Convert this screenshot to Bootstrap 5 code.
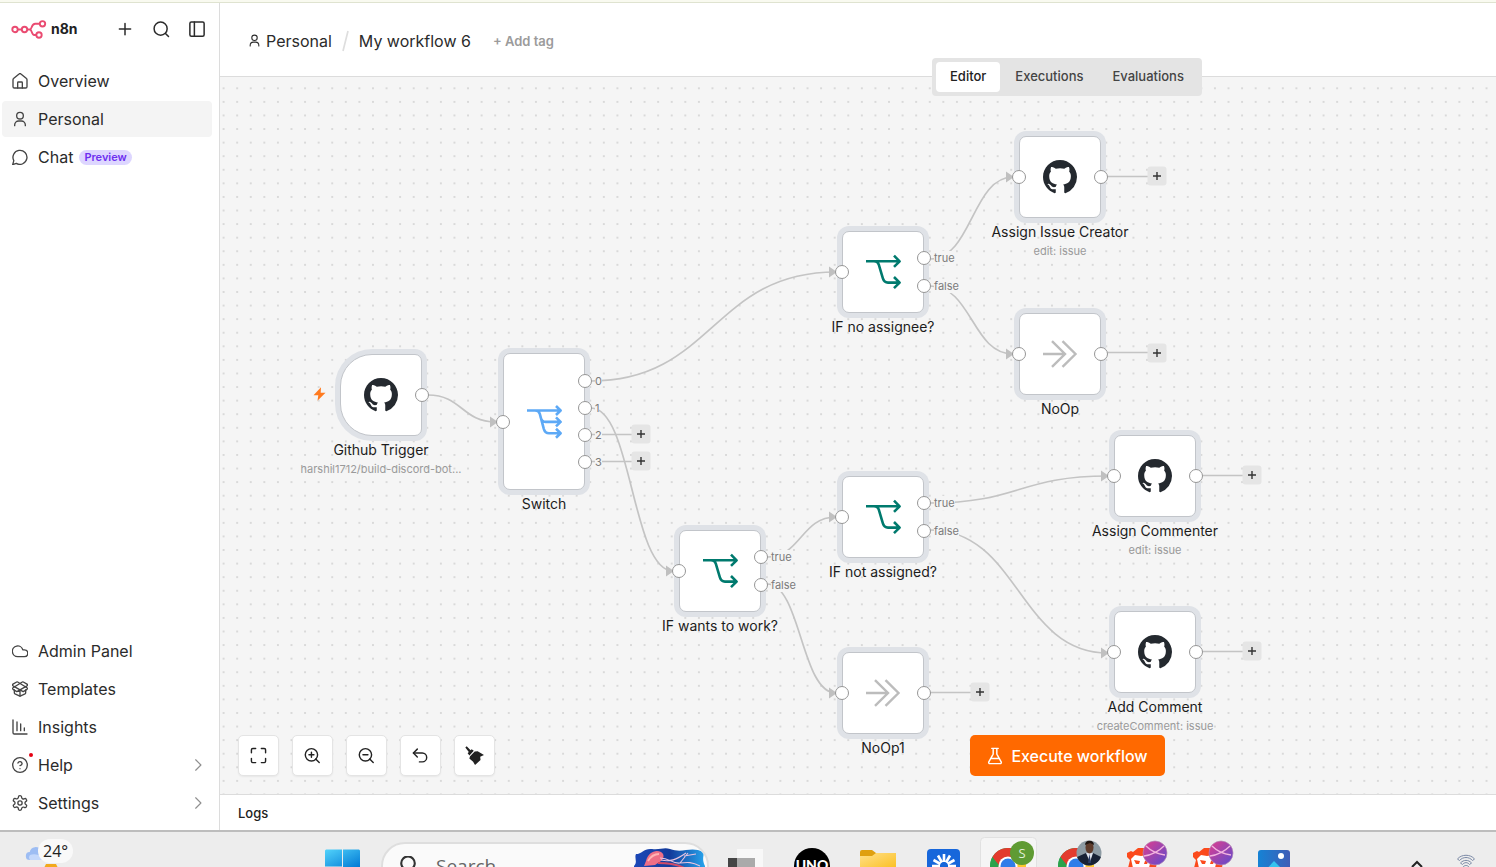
<!DOCTYPE html>
<html lang="en">
<head>
<meta charset="utf-8">
<meta name="viewport" content="width=device-width, initial-scale=1">
<title>My workflow 6 - n8n</title>
<link href="https://cdn.jsdelivr.net/npm/bootstrap@5.3.0/dist/css/bootstrap.min.css" rel="stylesheet">
<style>
  body { font-family: Inter, "Liberation Sans", sans-serif; font-size: 16px; line-height: 24px; color: #2b2b2b; background: #fff; }
  a { color: inherit; text-decoration: none; }
  svg { display: block; }
  .line-icon { fill: none; stroke: currentColor; stroke-width: 2; stroke-linecap: round; stroke-linejoin: round; flex: none; }
  .top-strip { height: 3px; background: #f9faf0; border-bottom: 1px solid #dfe3d0; flex: none; }
  .main-row, .main-pane { min-width: 0; min-height: 0; }

  /* sidebar */
  .side { width: 220px; border-right: 1px solid #dcdcdc; padding: 8px 7px 7px 2px; flex: none; }
  .side-head { height: 36px; padding-left: 9px; margin: 0 -3px 16px 0; }
  .brand-name { font-size: 14px; font-weight: 700; color: #222; margin-left: 4px; }
  .head-btn { width: 36px; height: 36px; padding: 0; border: 0; background: none; color: #2b2b2b; display: grid; place-items: center; }
  .side-link { height: 36px; padding: 0 7px 0 10px; gap: 10px; border-radius: 4px; color: #2b2b2b; margin-bottom: 2px; }
  .side-link.active { background: #f4f4f4; }
  .side-link > .line-icon:first-child { color: #444; width: 16px; height: 16px; }
  .preview { font-size: 11px; line-height: 15px; font-weight: 600; background: #ddd6ff; color: #6e2ff0; border-radius: 8px; padding: 0 5px; margin-left: -4px; }
  .alert-dot { width: 4px; height: 4px; top: 6px; left: 27px; border-radius: 2px; background: #e60012; }
  .chev { color: #8f8f8f; margin-left: auto; }

  /* header */
  .top-head { height: 74px; border-bottom: 1px solid #dcdcdc; padding: 2px 28px 0; flex: none; }
  .owner { gap: 5px; }
  .add-tag { border: 0; background: none; padding: 0; font-size: 13px; font-weight: 600; color: #9b9b9b; margin-left: 22px; }
  .view-tabs { left: 712px; top: 55px; z-index: 5; gap: 1px; background: #e4e4e4; border-radius: 4px; padding: 4px; }
  .view-tabs .nav-link { font-size: 13px; line-height: 20px; font-weight: 500; color: #444; padding: 4px 14px 6px; border-radius: 4px; height: 30px; }
  .view-tabs .nav-link.active { background: #fff; color: #222; }

  /* canvas */
  .flow { background: #f5f5f5; overflow: hidden; }
  .wires { inset: 0; width: 100%; height: 100%; }
  .wires .edge { fill: none; stroke: #c4c4c4; stroke-width: 1.7; }
  .wires .tip { fill: #c0c0c0; }
  .step { width: 82px; height: 82px; background: #fff; border: 1px solid #c2c5ca; border-radius: 7px; box-shadow: 0 0 0 5px #dfe2e7; display: grid; place-items: center; }
  .step.tall { height: 137px; }
  .step.start { border-radius: 32px 7px 7px 32px; }
  .caption { top: 100%; left: 50%; transform: translateX(-50%); padding-top: 5px; text-align: center; white-space: nowrap; font-size: 14px; line-height: 20px; font-weight: 400; color: #1c1c1c; }
  .caption span { display: block; font-size: 11px; line-height: 18px; color: #9a9a9a; }
  .port { width: 14px; height: 14px; border-radius: 7px; border: 1px solid #969696; background: #fff; transform: translate(-50%, -50%); }
  .port.in { left: -1px; top: 50%; }
  .port.out { left: calc(100% + 1px); top: 50%; }
  .port.yes { top: 33%; }
  .port.no { top: 67%; }
  .port.o0 { top: 20%; } .port.o1 { top: 40%; } .port.o2 { top: 60%; } .port.o3 { top: 80%; }
  .port em { position: absolute; left: 16px; top: -1px; font-size: 11px; line-height: 14px; font-style: normal; color: #7b7b7b; background: #f5f5f5; }
  .plus { width: 19px; height: 19px; padding: 0; border: 0; border-radius: 3px; background: #e5e5e5; color: #333; display: grid; place-items: center; transform: translate(-50%, -50%); left: calc(100% + 57px); }
  #trigger { left: 120px; top: 277px; }
  #switch { left: 283px; top: 276px; }
  #if-none { left: 622px; top: 154px; }
  #assign-creator { left: 799px; top: 59px; }
  #noop { left: 799px; top: 236px; }
  #if-not { left: 622px; top: 399px; }
  #if-wants { left: 459px; top: 453px; }
  #noop1 { left: 622px; top: 575px; }
  #assign-commenter { left: 894px; top: 358px; }
  #add-comment { left: 894px; top: 534px; }
  .plus.at-right { top: calc(50% - 1px); }
  .plus.at-o2 { top: 59%; }
  .plus.at-o3 { top: 79%; }
  .bolt { left: 93px; top: 310px; }
  .view-tools { left: 18px; bottom: 18px; gap: 13px; }
  .tool { width: 41px; height: 41px; border: 1px solid #e4e4e4; border-radius: 5px; background: #fff; color: #222; padding: 0; display: grid; place-items: center; box-shadow: 0 1px 2px #0000000f; }
  .run-btn { left: 750px; bottom: 18px; width: 195px; height: 41px; border: 0; border-radius: 5px; background: #ff6900; color: #fff; font-weight: 500; gap: 8px; padding: 0; }
  .logs { height: 36px; border-top: 1px solid #dcdcdc; padding: 1px 18px 0; font-size: 13px; font-weight: 500; color: #222; flex: none; }

  /* taskbar */
  .os-bar { height: 37px; border-top: 2px solid #bdbdbd; background: #ededed; overflow: hidden; flex: none; font-family: "Open Sans", "Noto Sans", sans-serif; }
  .weather { width: 325px; padding-left: 24px; height: 38px; flex: none; }
  .degree { background: #f9f9f9; border-radius: 12px; padding: 0 5px; margin-left: -6px; color: #222; font-size: 16px; line-height: 24px; }
  .sunrise { left: 44px; top: 32px; }
  .os-search { width: 328px; height: 48px; margin: 10px 3px 0 21px; border: 2px solid #dedede; border-radius: 24px; background: #fafafa; padding-left: 14px; flex: none; overflow: hidden; }
  .os-search input { border: 0; background: none; width: 190px; padding: 0; margin: 10px 8px 0 17px; font-size: 19px; line-height: 24px; color: #666; outline: 0; }
  .os-search input::placeholder { color: #666; opacity: 1; }
  .app { flex: none; width: 66px; height: 35px; border: 0; background: none; padding: 0; }
  .tray { padding-right: 20px; gap: 32px; }
</style>
</head>
<body class="vh-100 d-flex flex-column overflow-hidden">
<svg width="0" height="0" class="position-absolute" aria-hidden="true">
  <defs>
    <symbol id="github" viewBox="0 0 16 16"><path fill="#24292f" d="M8 0C3.58 0 0 3.58 0 8c0 3.54 2.29 6.53 5.47 7.59.4.07.55-.17.55-.38 0-.19-.01-.82-.01-1.49-2.01.37-2.53-.49-2.69-.94-.09-.23-.48-.94-.82-1.13-.28-.15-.68-.52-.01-.53.63-.01 1.08.58 1.23.82.72 1.21 1.87.87 2.33.66.07-.52.28-.87.51-1.07-1.78-.2-3.64-.89-3.64-3.95 0-.87.31-1.59.82-2.15-.08-.2-.36-1.02.08-2.12 0 0 .67-.21 2.2.82.64-.18 1.32-.27 2-.27s1.36.09 2 .27c1.53-1.04 2.2-.82 2.2-.82.44 1.1.16 1.92.08 2.12.51.56.82 1.27.82 2.15 0 3.07-1.87 3.75-3.65 3.95.29.25.54.73.54 1.48 0 1.07-.01 1.93-.01 2.2 0 .21.15.46.55.38A8.01 8.01 0 0 0 16 8c0-4.42-3.58-8-8-8"/></symbol>
    <symbol id="branch" viewBox="-18 -18 36 36"><g fill="none" stroke="#007a6e" stroke-width="2.6" stroke-linejoin="round"><path d="M-17-10.700H16.500M11-16.300l5.600 5.600-5.600 5.600M-9-10.700c3 0 4.100 1.200 4.800 3.300l4 13.500c.9 3 2.200 4.500 5.200 4.500h11.500M11 5l5.600 5.600-5.600 5.600"/></g></symbol>
    <symbol id="switcher" viewBox="-18 -18 36 36"><g fill="none" stroke="#5da9f6" stroke-width="2.600" stroke-linejoin="round"><path d="M-17-11.500H16.500M12-16l4.600 4.500L12-7M-9-11.500c3 0 4.100 1.200 4.800 3.300l4 15c.9 3 2.200 4.500 5.200 4.500h11.500M12 6.800l4.600 4.500L12 15.800M-3.500-5c1 3.500 2 4.900 5 4.900h15M12-4.600L16.600-.1 12 4.400"/></g></symbol>
    <symbol id="forward" viewBox="-18 -18 36 36"><path fill="none" stroke="#bcbcbc" stroke-width="2.400" d="M-17 0H5M-8-12.800L5 0-8 12.800M2.500-12.800L15.500 0 2.500 12.800"/></symbol>
    <symbol id="add" viewBox="0 0 9 9"><path d="M4.500.5v8M.5 4.500h8" stroke="currentColor" stroke-width="1.400"/></symbol>
    <symbol id="user" viewBox="0 0 24 24"><circle cx="12" cy="7" r="5"/><path d="M20 22v-1a6 6 0 0 0-6-6h-4a6 6 0 0 0-6 6v1"/></symbol>
    <symbol id="right" viewBox="0 0 24 24"><path d="m8 3 9 9-9 9"/></symbol>
    <symbol id="chrome" viewBox="0 0 36 36"><circle cx="18" cy="18" r="18" fill="#2ba24c"/><path d="M2.400 9A18 18 0 0 1 33.600 9L18 18z" fill="#e33b2e"/><path d="M2.400 9 10 22 18 9z" fill="#e33b2e"/><path d="M2.400 9A18 18 0 0 0 10 34l3-12z" fill="#2ba24c"/><path d="M33.600 9A18 18 0 0 1 18 36l8-18-8-9z" fill="#fdc72e"/><circle cx="18" cy="18" r="9.500" fill="#fff"/><circle cx="18" cy="18" r="7.500" fill="#2f7de9"/></symbol>
    <linearGradient id="orb" x1="0" y1="0" x2="1" y2="1"><stop offset="0" stop-color="#e23d8c"/><stop offset="1" stop-color="#5a4bd0"/></linearGradient>
    <symbol id="brave" viewBox="0 0 66 35"><path d="M19 21l4-2 2 1 5-4h10l6 6 3 6-1 8H20l2-8-3-3z" fill="#fb4a1c"/><path d="M23 27l4-4 6 1 6-1 4 4-2 9H25z" fill="#fff"/><path d="M26 28l6 1-1 3-3 0zM37 29l4-1-2 4-3 0z" fill="#fb4a1c"/><circle cx="47" cy="21" r="12" fill="url(#orb)" stroke="#b58ab5" stroke-width=".700"/><path d="M38 14c5 5 11 8 19 9M36 24c8-1 14-4 20-10" stroke="#f3b4df" stroke-width="1.300" fill="none"/></symbol>
  </defs>
</svg>

<div class="top-strip"></div>
<div class="main-row d-flex flex-grow-1">
  <nav class="side d-flex flex-column" aria-label="Main">
    <div class="side-head d-flex align-items-center">
      <svg width="36" height="20" viewBox="0 0 36 20" fill="none" stroke="#ea4b71" stroke-width="1.900"><circle cx="4" cy="10.500" r="2.700"/><circle cx="13.500" cy="10.500" r="2.700"/><circle cx="31.500" cy="4.800" r="2.700"/><circle cx="28" cy="16" r="2.700"/><path d="M6.700 10.500h4.100M16.200 10.500h2.600c2.400 0 1.300-5.700 5.500-5.700h4.500M18.800 10.500c2.400 0 1.500 5.500 4.500 5.500h2"/></svg>
      <span class="brand-name">n8n</span>
      <button class="head-btn ms-auto" aria-label="Add"><svg class="line-icon" width="18" height="18" viewBox="0 0 24 24"><path d="M4.500 12h15M12 4.500v15"/></svg></button>
      <button class="head-btn" aria-label="Search"><svg class="line-icon" width="18" height="18" viewBox="0 0 24 24"><circle cx="11.500" cy="11.500" r="8.700"/><path d="m22 22-4-4"/></svg></button>
      <button class="head-btn" aria-label="Toggle sidebar"><svg class="line-icon" width="18" height="18" viewBox="0 0 24 24"><rect x="2.500" y="2.500" width="19" height="19" rx="2"/><path d="M8.500 2.500v19"/></svg></button>
    </div>
    <a href="#" class="side-link d-flex align-items-center"><svg class="line-icon" viewBox="0 0 24 24"><path d="M15.500 22.500v-8a1 1 0 0 0-1-1h-5a1 1 0 0 0-1 1v8"/><path d="M1.500 10a2 2 0 0 1 .8-1.600l8.300-7a2 2 0 0 1 2.800 0l8.300 7a2 2 0 0 1 .8 1.600v10.500a2 2 0 0 1-2 2h-17a2 2 0 0 1-2-2z"/></svg>Overview</a>
    <a href="#" class="side-link active d-flex align-items-center"><svg class="line-icon" viewBox="0 0 24 24"><use href="#user"/></svg>Personal</a>
    <a href="#" class="side-link d-flex align-items-center"><svg class="line-icon" viewBox="0 0 24 24"><path d="M6.500 21.500A10.500 10.500 0 1 0 2.700 17.500L1 23.500z"/></svg>Chat <span class="preview">Preview</span></a>
    <div class="mt-auto">
      <a href="#" class="side-link d-flex align-items-center"><svg class="line-icon" viewBox="0 0 24 24"><path d="M18.500 20.500H8.500a8 8 0 1 1 7.700-10.300h2.300a5.150 5.150 0 1 1 0 10.300z"/></svg>Admin Panel</a>
      <a href="#" class="side-link d-flex align-items-center"><svg class="line-icon" viewBox="0 0 24 24"><path d="M12 22.500v-9M15.500 1.500a1.500 1.500 0 0 1 1.500 0l5.500 3.200a1.500 1.500 0 0 1 0 2.500L8 15.500a1.500 1.500 0 0 1-1.500 0L1.500 12.500a1.500 1.500 0 0 1 0-2.300z"/><path d="M20.500 13.500v4a2 2 0 0 1-1 1.800l-6.500 3a2 2 0 0 1-2 0l-6.500-3a2 2 0 0 1-1-1.800v-4"/><path d="M22.500 12.500a1.500 1.500 0 0 0 0-2.300L8.500 1.500a1.500 1.500 0 0 0-1.500 0L1.500 4.700a1.500 1.500 0 0 0 0 2.500L16 15.500a1.500 1.500 0 0 0 1.500 0z"/></svg>Templates</a>
      <a href="#" class="side-link d-flex align-items-center"><svg class="line-icon" viewBox="0 0 24 24"><path d="M1.500 1.500v19a2 2 0 0 0 2 2h19M7.500 17.500v-13M13 17.500v-10M18.500 17.500v-4"/></svg>Insights</a>
      <a href="#" class="side-link d-flex align-items-center position-relative"><svg class="line-icon" viewBox="0 0 24 24"><circle cx="12" cy="12" r="11"/><path d="M8.900 9a3.200 3.200 0 0 1 6.200 1c0 2-3.100 3-3.100 3M12 17.500v.01"/></svg><span class="alert-dot position-absolute"></span>Help<svg class="line-icon chev" width="14" height="14" viewBox="0 0 24 24"><use href="#right"/></svg></a>
      <a href="#" class="side-link d-flex align-items-center"><svg class="line-icon" viewBox="0 0 24 24"><path d="M12.220 1h-.44a2.200 2.200 0 0 0-2.200 2.200v.2a2.200 2.200 0 0 1-1.100 1.900l-.5.300a2.200 2.200 0 0 1-2.200 0l-.2-.1a2.200 2.200 0 0 0-3 .8l-.2.400a2.200 2.200 0 0 0 .8 3l.2.100a2.200 2.200 0 0 1 1.100 1.900v.5a2.200 2.200 0 0 1-1.100 1.900l-.2.100a2.200 2.200 0 0 0-.8 3l.2.400a2.200 2.200 0 0 0 3 .8l.2-.1a2.200 2.200 0 0 1 2.200 0l.5.300a2.200 2.200 0 0 1 1.100 1.900v.2A2.200 2.200 0 0 0 11.800 23h.4a2.200 2.200 0 0 0 2.200-2.200v-.2a2.200 2.200 0 0 1 1.100-1.900l.5-.3a2.200 2.200 0 0 1 2.200 0l.2.100a2.200 2.200 0 0 0 3-.8l.2-.4a2.200 2.200 0 0 0-.8-3l-.2-.1a2.200 2.200 0 0 1-1.100-1.900v-.5a2.200 2.200 0 0 1 1.100-1.900l.2-.1a2.200 2.200 0 0 0 .8-3l-.2-.4a2.200 2.200 0 0 0-3-.8l-.2.100a2.200 2.200 0 0 1-2.200 0l-.5-.3a2.200 2.200 0 0 1-1.100-1.900v-.2A2.200 2.200 0 0 0 12.200 1z"/><circle cx="12" cy="12" r="3.200"/></svg>Settings<svg class="line-icon chev" width="14" height="14" viewBox="0 0 24 24"><use href="#right"/></svg></a>
    </div>
  </nav>

  <main class="main-pane position-relative d-flex flex-column flex-grow-1">
    <header class="top-head d-flex align-items-center">
      <a href="#" class="owner d-flex align-items-center"><svg class="line-icon" width="13" height="13" viewBox="0 0 24 24"><use href="#user"/></svg>Personal</a>
      <svg class="mx-2" width="11" height="22" viewBox="0 0 11 22"><path d="M3 21 8 1" stroke="#dedede" stroke-width="1.700"/></svg>
      <span>My workflow 6</span>
      <button class="add-tag">+ Add tag</button>
    </header>
    <ul class="view-tabs nav position-absolute flex-nowrap">
      <li><a href="#" class="nav-link active" aria-current="page">Editor</a></li>
      <li><a href="#" class="nav-link">Executions</a></li>
      <li><a href="#" class="nav-link">Evaluations</a></li>
    </ul>

    <section class="flow position-relative flex-grow-1" aria-label="Workflow canvas">
      <svg class="wires position-absolute">
        <defs><pattern id="dots" x="-3.200" y="4.500" width="13.580" height="13.580" patternUnits="userSpaceOnUse"><circle cx="6.800" cy="6.800" r=".650" fill="#a6a6a6"/></pattern></defs>
        <rect width="100%" height="100%" fill="url(#dots)"/>
        <g transform="translate(-220 -77)">
          <path class="edge" d="M428 395C462 395 462 422 496 422M591 381C713 381 713 272 836 272M591 408C632 408 632 571 673 571M930 259C972 259 972 177 1013 177M930 286C972 286 972 354 1013 354M767 557C801 557 801 517 836 517M767 584C801 584 801 693 836 693M930 503C1019 503 1019 476 1108 476M930 530C1019 530 1019 653 1108 653"/>
          <path class="edge" d="M591 434.500h42M591 461.500h42M1107 176.500h42M1107 352.500h42M1202 475.500h42M1202 651.500h42M930 692.500h42"/>
          <path class="tip" d="M490 416.500l8 5.500-8 5.500zM829 266.500l8 5.500-8 5.500zM666 565.500l8 5.500-8 5.500zM1006 171.500l8 5.500-8 5.500zM1006 348.500l8 5.500-8 5.500zM829 511.500l8 5.500-8 5.500zM829 687.500l8 5.500-8 5.500zM1101 470.500l8 5.500-8 5.500zM1101 647.500l8 5.500-8 5.500z"/>
        </g>
      </svg>
      <svg class="bolt position-absolute" width="13" height="14" viewBox="0 0 13 14"><path d="M8 .3.500 8.200h4.800L4.500 13.700 12.500 5.700H7.700z" fill="#ff7a1f"/></svg>

      <div id="trigger" class="step start position-absolute"><svg width="34" height="34"><use href="#github"/></svg>
        <i class="port out position-absolute"></i><div class="caption position-absolute">Github Trigger<span>harshil1712/build-discord-bot...</span></div></div>
      <div id="switch" class="step tall position-absolute"><svg width="36" height="36"><use href="#switcher"/></svg>
        <i class="port in position-absolute"></i><i class="port out o0 position-absolute"><em>0</em></i><i class="port out o1 position-absolute"><em>1</em></i><i class="port out o2 position-absolute"><em>2</em></i><i class="port out o3 position-absolute"><em>3</em></i>
        <button class="plus at-o2 position-absolute" aria-label="Add node"><svg width="9" height="9"><use href="#add"/></svg></button><button class="plus at-o3 position-absolute" aria-label="Add node"><svg width="9" height="9"><use href="#add"/></svg></button>
        <div class="caption position-absolute">Switch</div></div>
      <div id="if-none" class="step position-absolute"><svg width="36" height="36"><use href="#branch"/></svg>
        <i class="port in position-absolute"></i><i class="port out yes position-absolute"><em>true</em></i><i class="port out no position-absolute"><em>false</em></i><div class="caption position-absolute">IF no assignee?</div></div>
      <div id="assign-creator" class="step position-absolute"><svg width="34" height="34"><use href="#github"/></svg>
        <i class="port in position-absolute"></i><i class="port out position-absolute"></i><button class="plus at-right position-absolute" aria-label="Add node"><svg width="9" height="9"><use href="#add"/></svg></button><div class="caption position-absolute">Assign Issue Creator<span>edit: issue</span></div></div>
      <div id="noop" class="step position-absolute"><svg width="36" height="36"><use href="#forward"/></svg>
        <i class="port in position-absolute"></i><i class="port out position-absolute"></i><button class="plus at-right position-absolute" aria-label="Add node"><svg width="9" height="9"><use href="#add"/></svg></button><div class="caption position-absolute">NoOp</div></div>
      <div id="if-not" class="step position-absolute"><svg width="36" height="36"><use href="#branch"/></svg>
        <i class="port in position-absolute"></i><i class="port out yes position-absolute"><em>true</em></i><i class="port out no position-absolute"><em>false</em></i><div class="caption position-absolute">IF not assigned?</div></div>
      <div id="if-wants" class="step position-absolute"><svg width="36" height="36"><use href="#branch"/></svg>
        <i class="port in position-absolute"></i><i class="port out yes position-absolute"><em>true</em></i><i class="port out no position-absolute"><em>false</em></i><div class="caption position-absolute">IF wants to work?</div></div>
      <div id="noop1" class="step position-absolute"><svg width="36" height="36"><use href="#forward"/></svg>
        <i class="port in position-absolute"></i><i class="port out position-absolute"></i><button class="plus at-right position-absolute" aria-label="Add node"><svg width="9" height="9"><use href="#add"/></svg></button><div class="caption position-absolute">NoOp1</div></div>
      <div id="assign-commenter" class="step position-absolute"><svg width="34" height="34"><use href="#github"/></svg>
        <i class="port in position-absolute"></i><i class="port out position-absolute"></i><button class="plus at-right position-absolute" aria-label="Add node"><svg width="9" height="9"><use href="#add"/></svg></button><div class="caption position-absolute">Assign Commenter<span>edit: issue</span></div></div>
      <div id="add-comment" class="step position-absolute"><svg width="34" height="34"><use href="#github"/></svg>
        <i class="port in position-absolute"></i><i class="port out position-absolute"></i><button class="plus at-right position-absolute" aria-label="Add node"><svg width="9" height="9"><use href="#add"/></svg></button><div class="caption position-absolute">Add Comment<span>createComment: issue</span></div></div>

      <div class="view-tools d-flex position-absolute">
        <button class="tool" aria-label="Fit view"><svg class="line-icon" width="17" height="17" viewBox="0 0 24 24"><path d="M8 2H4a2 2 0 0 0-2 2V8M22 8V4a2 2 0 0 0-2-2H16M2 16v4a2 2 0 0 0 2 2H8M16 22h4a2 2 0 0 0 2-2V16"/></svg></button>
        <button class="tool" aria-label="Zoom in"><svg class="line-icon" width="17" height="17" viewBox="0 0 24 24"><circle cx="10.500" cy="11" r="8.700"/><path d="m21.500 22-5-5M10.500 7.500v7M7 11h7"/></svg></button>
        <button class="tool" aria-label="Zoom out"><svg class="line-icon" width="17" height="17" viewBox="0 0 24 24"><circle cx="10.500" cy="11" r="8.700"/><path d="m21.500 22-5-5M7 11h7"/></svg></button>
        <button class="tool" aria-label="Undo"><svg class="line-icon" width="17" height="17" viewBox="0 0 24 24"><path d="M7.500 14 2 8.500 7.500 3"/><path d="M2 8.500h12.500a6 6 0 0 1 0 12.500h-4"/></svg></button>
        <button class="tool" aria-label="Tidy up"><svg width="19" height="19" viewBox="0 0 18 18" fill="currentColor"><path d="M.3 1.500 1.600.3 5.300 4l1-1 2 1.600-4.100 4.300-1.700-2 1.100-1.200zM9.200 5.200 12 5l6 3.500-3.600 1.600.3 3.200L9.500 18l-1.800-3-3.600-3.200.7-2.200z"/></svg></button>
      </div>
      <button class="run-btn d-flex align-items-center justify-content-center position-absolute"><svg class="line-icon" width="16" height="18" viewBox="0 0 22 24"><path d="M13.500 1.500v7.300a2 2 0 0 0 .2.900L19.500 20a1.700 1.700 0 0 1-1.500 2.500H4A1.700 1.700 0 0 1 2.500 20L8.300 9.700a2 2 0 0 0 .2-.9V1.500M5 15.500h12M6.500 1.500h9"/></svg>Execute workflow</button>
    </section>
    <footer class="logs d-flex align-items-center">Logs</footer>
  </main>
</div>

<div class="os-bar d-flex align-items-start">
  <div class="weather d-flex align-items-center position-relative">
    <svg width="20" height="20" viewBox="0 0 20 20"><path d="M6 19a4 4 0 0 1-.3-8A6 6 0 0 1 17 9.500l3 9.500z" fill="#9dbdf3"/><path d="M6 19a4 4 0 0 1 0-5c4-2 9 0 12 1v4z" fill="#c4d8fb"/></svg>
    <span class="degree">24°</span>
    <svg class="sunrise position-absolute" width="14" height="4"><path d="M2 0h10l2 4H0z" fill="#f2a91d"/></svg>
  </div>
  <svg width="35" height="35" class="flex-shrink-0" viewBox="0 0 35 35"><defs><linearGradient id="win" x1="0" y1="0" x2="1" y2="1"><stop offset="0" stop-color="#52d3fb"/><stop offset="1" stop-color="#0078d4"/></linearGradient></defs><path d="M1 17.500h16v17H0v-16zM18 17.500h16l1 1v17H18z" fill="url(#win)"/></svg>
  <label class="os-search d-flex align-items-start">
    <svg class="mt-2 pt-1 flex-shrink-0" width="22" height="26" viewBox="0 0 22 26" fill="none" stroke="#333" stroke-width="2.500"><circle cx="11" cy="8.500" r="8"/><path d="m17 15 4 4"/></svg>
    <input type="text" placeholder="Search" aria-label="Search">
    <svg class="flex-shrink-0" width="72" height="40" viewBox="0 0 72 40"><defs><linearGradient id="sea"><stop offset="0" stop-color="#1c48b8"/><stop offset=".5" stop-color="#123a9a"/><stop offset="1" stop-color="#27a4ec"/></linearGradient></defs><path d="M2 10c6 0 8-6 16-5s12-2 18 0 10 2 16 1 12-1 17 2c2 3-2 6 2 14v18H0V22c4-4 0-8 2-12z" fill="url(#sea)"/><path d="M12 17C14 8 22 5 27 8s2 9-3 11l-3 2-11 1z" fill="#ee6f86"/><path d="M14 17c3-5 7-7 11-7" stroke="#ffb4b4" stroke-width="2" fill="none"/><path d="M26 14c10 0 12 6 20 5s12-1 20 3M27 16c9 2 15 0 25-7M46 19l8-10M50 12l12-2" stroke="#e9c4df" stroke-width="1.100" fill="none"/><path d="M24 19c10 0 20 1 28 6" stroke="#d04a67" stroke-width="2" fill="none"/></svg>
  </label>
  <button class="app" aria-label="Task view"><svg width="66" height="35"><rect x="16" y="26" width="27" height="20" fill="#454545"/><rect x="25" y="17" width="26" height="26" fill="#f8f8f8"/><path d="M25 26h18v10H25z" fill="#aaa"/></svg></button>
  <button class="app" aria-label="Uno"><svg width="66" height="35"><circle cx="34" cy="34" r="18" fill="#000"/><text x="34" y="38" fill="#fff" font-family="Lato, sans-serif" font-weight="900" font-size="14" text-anchor="middle">UNO</text></svg></button>
  <button class="app" aria-label="Files"><svg width="66" height="35"><defs><linearGradient id="fold" x1="0" y1="0" x2="1" y2="1"><stop offset="0" stop-color="#ffe08a"/><stop offset="1" stop-color="#fbbf1f"/></linearGradient></defs><path d="M16 20a2 2 0 0 1 2-2h10l4 3h18v15H16z" fill="#dfa00f"/><path d="M16 24h12l4-3h20v16H16z" fill="url(#fold)"/></svg></button>
  <button class="app" aria-label="Assistant"><svg width="66" height="35"><rect x="17" y="17" width="33" height="33" rx="4" fill="#1767db"/><path d="M34 22v8M28 23.500l4 7M40 23.500l-4 7M23.500 28l7 4M44.500 28l-7 4M22 34h8M46 34h-8" stroke="#fff" stroke-width="2.600"/></svg></button>
  <button class="app" aria-label="Chrome"><svg width="66" height="35"><rect x="4.500" y="5.500" width="56" height="50" rx="4" fill="#f5f5f5" stroke="#e1e1e1"/><use href="#chrome" x="14" y="16" width="36" height="36"/><circle cx="46" cy="21" r="12" fill="#5f9b33"/><text x="46" y="26" fill="#e2efda" font-size="13" text-anchor="middle">S</text></svg></button>
  <button class="app" aria-label="Chrome, second profile"><svg width="66" height="35"><use href="#chrome" x="16" y="16" width="36" height="36"/><clipPath id="face"><circle cx="47" cy="21" r="12.500"/></clipPath><g clip-path="url(#face)"><path d="M34 8h26v26H34z" fill="#8d9ba3"/><path d="M35 34V25l9-4h7l8 4v9z" fill="#182235"/><path d="M44 21h7l-3 9z" fill="#dfe5ee"/><path d="M47.500 22l1.500 9h-3z" fill="#2a3d66"/><ellipse cx="47.500" cy="15.500" rx="4" ry="6" fill="#5e3c2c"/><path d="M43 13c0-6 9-6 9 0l-4-2z" fill="#201713"/></g></svg></button>
  <button class="app" aria-label="Brave"><svg width="66" height="35"><use href="#brave"/></svg></button>
  <button class="app" aria-label="Brave, second profile"><svg width="66" height="35"><use href="#brave"/></svg></button>
  <button class="app" aria-label="Photos"><svg width="66" height="35"><defs><linearGradient id="pic"><stop offset="0" stop-color="#1583d5"/><stop offset="1" stop-color="#3f5db6"/></linearGradient></defs><rect x="18" y="18" width="32" height="32" rx="3" fill="url(#pic)"/><circle cx="41" cy="24" r="3" fill="#fff"/><path d="M22 42 34 29l13 13z" fill="#35c3ef"/></svg></button>
  <div class="tray ms-auto d-flex">
    <svg width="14" height="35" fill="none" stroke="#222" stroke-width="2"><path d="m2 35 5-5 5 5"/></svg>
    <svg width="20" height="35" fill="none" stroke="#7b89a6" stroke-width="1"><path d="M1.500 27c4-5 13-5 17 0l-2 1.500c-3.500-4-9.500-4-13 0zM4.500 31c3-3.500 8-3.500 11 0l-2 1.500c-2-2.500-5-2.500-7 0zM7 35c1.500-2 4.500-2 6 0"/></svg>
  </div>
</div>
<script src="https://cdn.jsdelivr.net/npm/bootstrap@5.3.0/dist/js/bootstrap.bundle.min.js"></script>
</body>
</html>
